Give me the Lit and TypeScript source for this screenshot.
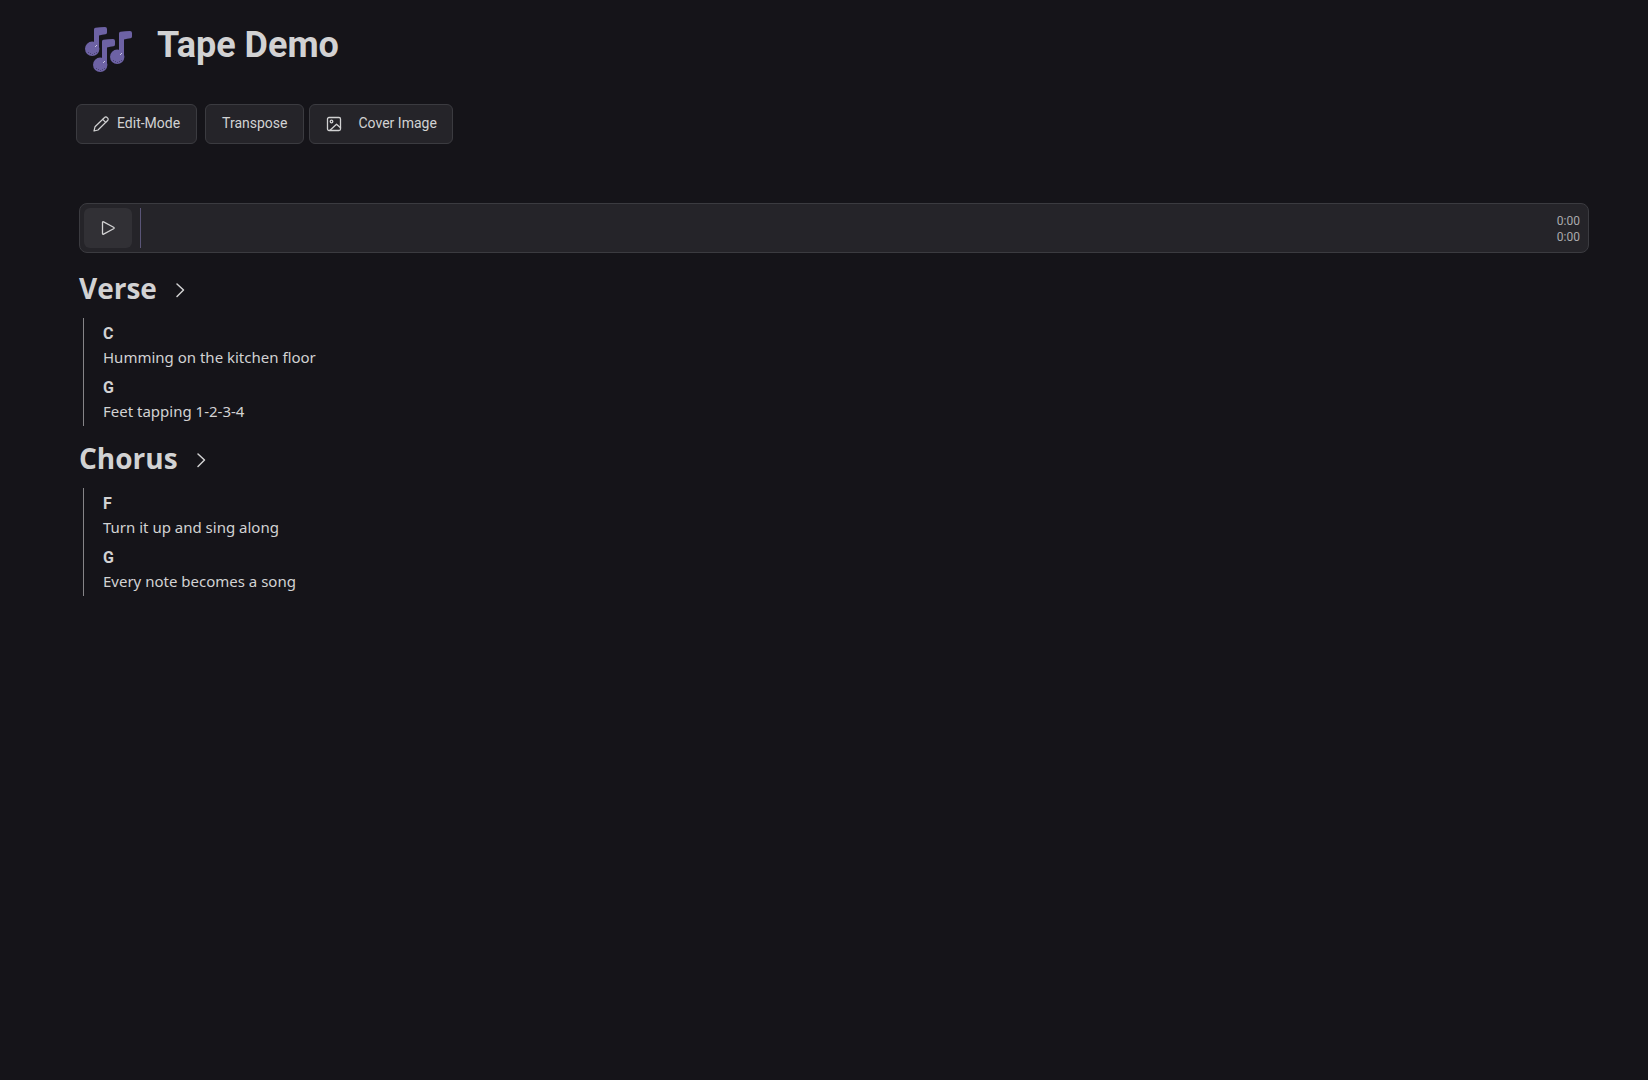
import { LitElement, html, css, svg } from "lit";
import { customElement, state } from "lit/decorators.js";

interface Line {
  chord: string;
  lyric: string;
}

interface Section {
  title: string;
  lines: Line[];
}

/* One eighth note: x/y is its top left corner, drop lengthens the stem. */
const note = (x: number, y: number, drop: number) => svg`
  <g transform="translate(${x} ${y})">
    <path d="M9 ${22 + drop}V2.500Q9 1 10.500 .800Q15 0 20 0Q22 0 22 2V5.500Q22 7 20.500 7.200Q17 7.300 14 8.600V${22 + drop}Z" />
    <g transform="translate(0 ${drop})">
      <circle cx="7.200" cy="21.800" r="7.200" />
      <path class="shine" d="M10 19h1v1h-1zM11 18h1v1h-1z" />
      <path class="grain" d="M3 25h1v1h-1zM5 26h1v1h-1zM7 27h1v1h-1zM9 26h1v1h-1zM11 25h1v1h-1z" />
    </g>
  </g>`;

@customElement("app-root")
export class AppRoot extends LitElement {
  @state() private sections: Section[] = [
    {
      title: "Verse",
      lines: [
        { chord: "C", lyric: "Humming on the kitchen floor" },
        { chord: "G", lyric: "Feet tapping 1-2-3-4" },
      ],
    },
    {
      title: "Chorus",
      lines: [
        { chord: "F", lyric: "Turn it up and sing along" },
        { chord: "G", lyric: "Every note becomes a song" },
      ],
    },
  ];

  static styles = css`
    :host {
      display: block;
      box-sizing: border-box;
      min-height: 100vh;
      padding: 20px 59px 40px 79px;
      background: #151419;
      color: #d2d2d3;
      font-family: "Noto Sans", "Open Sans", sans-serif;
      font-size: 15px;
      line-height: 24px;
    }
    * {
      box-sizing: border-box;
    }
    h1,
    h2,
    p {
      margin: 0;
    }
    button {
      margin: 0;
      color: inherit;
      cursor: pointer;
    }
    svg {
      display: block;
      flex: none;
    }
    .header {
      display: flex;
      align-items: center;
      gap: 25px;
      padding-left: 5px;
      height: 60px;
    }
    .notes {
      fill: #6d62a4;
    }
    .shine {
      fill: #c9c4e4;
    }
    .grain {
      fill: #4a4374;
    }
    .title {
      padding-bottom: 10px;
      font: 700 36px/48px Roboto, sans-serif;
    }
    .toolbar {
      display: flex;
      gap: 5px;
      margin: 24px 0 59px -3px;
    }
    .tool {
      display: flex;
      align-items: center;
      gap: 8px;
      height: 40px;
      padding: 0 15px 0 16px;
      border: 1px solid #3b3b40;
      border-radius: 6px;
      background: #252429;
      font: 400 14px/20px Roboto, sans-serif;
    }
    .tool span {
      padding-bottom: 2px;
    }
    .tool.edit {
      margin-right: 3px;
      padding-right: 16px;
    }
    .tool.cover {
      gap: 17px;
    }
    .line-icon {
      fill: none;
      stroke: currentColor;
      stroke-linecap: round;
      stroke-linejoin: round;
    }
    .player {
      display: flex;
      align-items: center;
      height: 50px;
      margin-bottom: 3px;
      padding: 4px 8px 4px 4px;
      border: 1px solid #3b3b40;
      border-radius: 8px;
      background: #252429;
    }
    .play {
      display: grid;
      place-items: center;
      width: 48px;
      height: 40px;
      padding: 0;
      border: 0;
      border-radius: 6px;
      background: #313035;
    }
    .track {
      flex: 1;
      height: 40px;
      margin-left: 8px;
      border-left: 1px solid #5a5577;
    }
    .times {
      padding-top: 2px;
      color: #aaaaad;
      font: 400 12px/16px Roboto, sans-serif;
      text-align: right;
    }
    .section-title {
      display: flex;
      align-items: center;
      gap: 16px;
      height: 62px;
      padding-top: 2px;
      font: 700 28px/40px "Open Sans", sans-serif;
    }
    .fold {
      display: grid;
      padding: 4px 0 0;
      border: 0;
      background: none;
    }
    .lines {
      margin-left: 4px;
      padding-left: 19px;
      border-left: 1px solid #858487;
    }
    .line {
      padding: 4px 0 3px;
    }
    .chord {
      font: 700 16px/23px Roboto, sans-serif;
    }
  `;

  render() {
    return html`
      <header class="header">
        <svg class="notes" width="48" height="48" viewBox="0 0 48 48" aria-hidden="true">
          ${note(1, 1, 0)}${note(26, 5, 4)}${note(9, 13, 4)}
        </svg>
        <h1 class="title">Tape Demo</h1>
      </header>
      <div class="toolbar">
        <button class="tool edit" type="button">
          <svg class="line-icon" width="16" height="16" viewBox="0 0 16 16" stroke-width="1.200">
            <path d="M1 15l1-4.200L11.600 1.500a1.700 1.700 0 0 1 2.500 0l.5.500a1.700 1.700 0 0 1 0 2.500L5 14z" />
            <path d="M9.700 3.400l3 3" />
          </svg>
          <span>Edit-Mode</span>
        </button>
        <button class="tool" type="button"><span>Transpose</span></button>
        <button class="tool cover" type="button">
          <svg class="line-icon" width="16" height="16" viewBox="0 0 16 16" stroke-width="1.300">
            <rect x="1.500" y="1.500" width="13" height="13" rx="1.500" />
            <circle cx="5.500" cy="5.500" r="1.300" />
            <path d="M4 14.200l6.500-6 4 3.500" />
          </svg>
          <span>Cover Image</span>
        </button>
      </div>
      <div class="player">
        <button class="play" type="button" aria-label="Play">
          <svg class="line-icon" width="16" height="16" viewBox="0 0 16 16" stroke-width="1.300">
            <path d="M2.500 2.500v11q0 1.200 1.100.6l10-5.400q1.100-.7 0-1.400L3.600 1.900q-1.100-.6-1.100.6z" />
          </svg>
        </button>
        <div class="track"></div>
        <div class="times">
          <div>0:00</div>
          <div>0:00</div>
        </div>
      </div>
      ${this.sections.map(
        (section) => html`
          <section>
            <h2 class="section-title">
              ${section.title}
              <button class="fold" type="button" aria-label="Toggle ${section.title}">
                <svg class="line-icon" width="16" height="16" viewBox="0 0 16 16" stroke-width="1.500">
                  <path d="M4 2l6.500 6L4 14.500" />
                </svg>
              </button>
            </h2>
            <div class="lines">
              ${section.lines.map(
                (line) => html`
                  <div class="line">
                    <p class="chord">${line.chord}</p>
                    <p>${line.lyric}</p>
                  </div>
                `,
              )}
            </div>
          </section>
        `,
      )}
    `;
  }
}
